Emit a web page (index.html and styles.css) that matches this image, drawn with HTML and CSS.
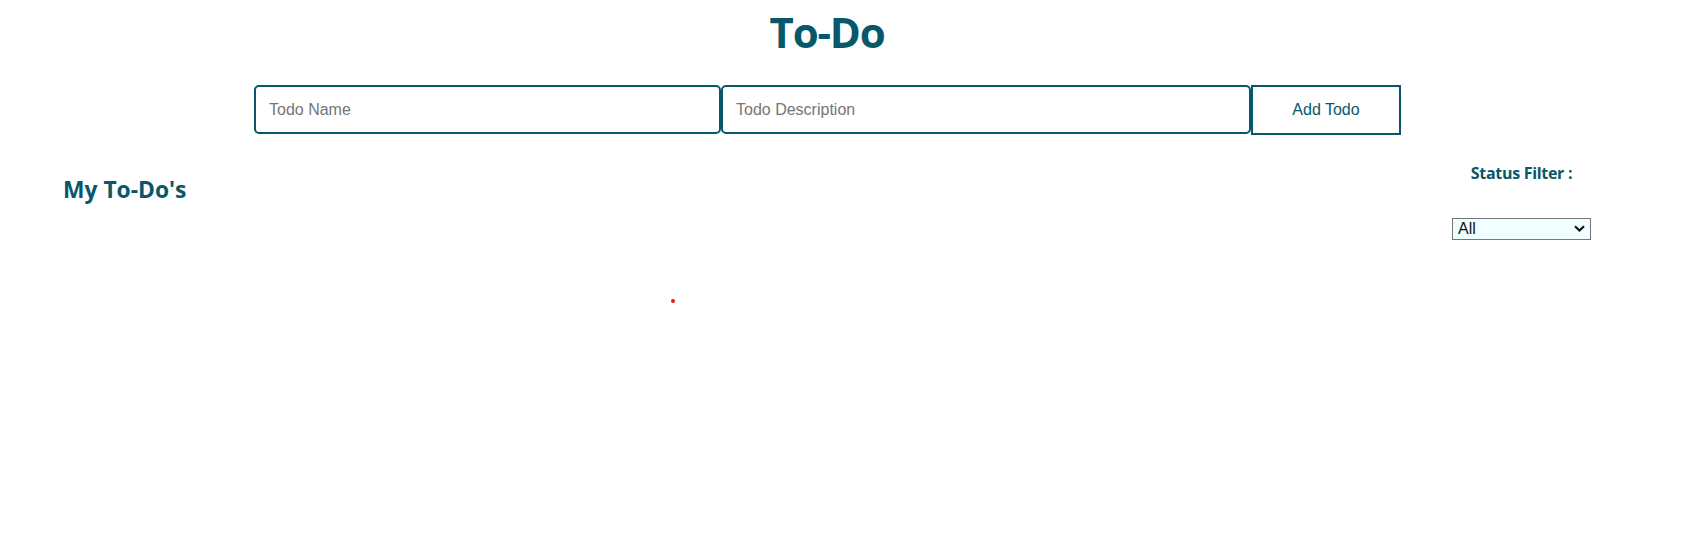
FILE: index.html
```html
<!DOCTYPE html>
<html lang="en">
<head>
<meta charset="utf-8">
<title>To-Do</title>
<link rel="stylesheet" href="styles.css">
</head>
<body>
<header class="header">
  <h1 class="title">To-Do</h1>
</header>
<form class="todo-form">
  <input class="field field-name" type="text" placeholder="Todo Name">
  <input class="field field-desc" type="text" placeholder="Todo Description">
  <button class="add-btn" type="button">Add Todo</button>
</form>
<section class="list-head">
  <h2 class="list-title">My To-Do's</h2>
  <div class="filter">
    <div class="filter-label">Status Filter :</div>
    <div class="select-wrap">
      <select class="filter-select">
        <option>All</option>
        <option>Completed</option>
        <option>Not Completed</option>
      </select>
      <svg class="chevron" width="11" height="7" viewBox="0 0 11 7"><path d="M1 1.2 L5.5 5.5 L10 1.2" fill="none" stroke="#111" stroke-width="2.2"/></svg>
    </div>
  </div>
</section>
<span class="dot"></span>
</body>
</html>
```

FILE: styles.css
```css
html, body {
  margin: 0;
  padding: 0;
  background: #ffffff;
}
body {
  font-family: "Open Sans", "Noto Sans", sans-serif;
  color: #07586a;
  position: relative;
  min-height: 546px;
}
.header {
  width: 1654px;
  text-align: center;
  padding-top: 7px;
}
.title {
  margin: 0;
  font-size: 42px;
  line-height: 50px;
  font-weight: 700;
  letter-spacing: -1.2px;
  color: #07586a;
}
.todo-form {
  display: flex;
  align-items: flex-start;
  margin: 28px 0 0 254px;
}
.field {
  box-sizing: border-box;
  height: 49px;
  border: 2px solid #07586a;
  border-radius: 5px;
  padding: 1px 13px 0 13px;
  font-family: "Liberation Sans", Arial, sans-serif;
  font-size: 16px;
  color: #222;
  background: #fff;
  outline: none;
}
.field::placeholder {
  color: #757575;
}
.field-name {
  width: 467px;
}
.field-desc {
  width: 530px;
}
.add-btn {
  box-sizing: border-box;
  width: 150px;
  height: 50px;
  border: 2px solid #07586a;
  border-radius: 0;
  background: #fff;
  color: #07586a;
  font-family: "Liberation Sans", Arial, sans-serif;
  font-size: 16px;
  padding: 0;
}
.list-head {
  display: flex;
  justify-content: space-between;
  align-items: flex-start;
  padding: 0 104px 0 63px;
}
.list-title {
  margin: 40px 0 0 0;
  font-size: 22.8px;
  line-height: 30px;
  font-weight: 700;
}
.filter {
  width: 139px;
  display: flex;
  flex-direction: column;
  align-items: center;
  margin-top: 28px;
}
.filter-label {
  font-size: 16px;
  line-height: 20px;
  font-weight: 700;
  letter-spacing: -0.3px;
  white-space: nowrap;
}
.select-wrap {
  position: relative;
  margin-top: 34px;
  width: 139px;
  height: 22px;
}
.filter-select {
  appearance: none;
  -webkit-appearance: none;
  box-sizing: border-box;
  width: 139px;
  height: 22px;
  border: 1px solid #767676;
  border-radius: 0;
  background: #f0ffff;
  font-family: "Liberation Sans", Arial, sans-serif;
  font-size: 16px;
  color: #111;
  padding: 0 0 0 5px;
  margin: 0;
}
.chevron {
  position: absolute;
  right: 6px;
  top: 8px;
  pointer-events: none;
}
.dot {
  position: absolute;
  left: 671px;
  top: 299px;
  width: 4px;
  height: 4px;
  border-radius: 50%;
  background: #e31b1b;
}
```
